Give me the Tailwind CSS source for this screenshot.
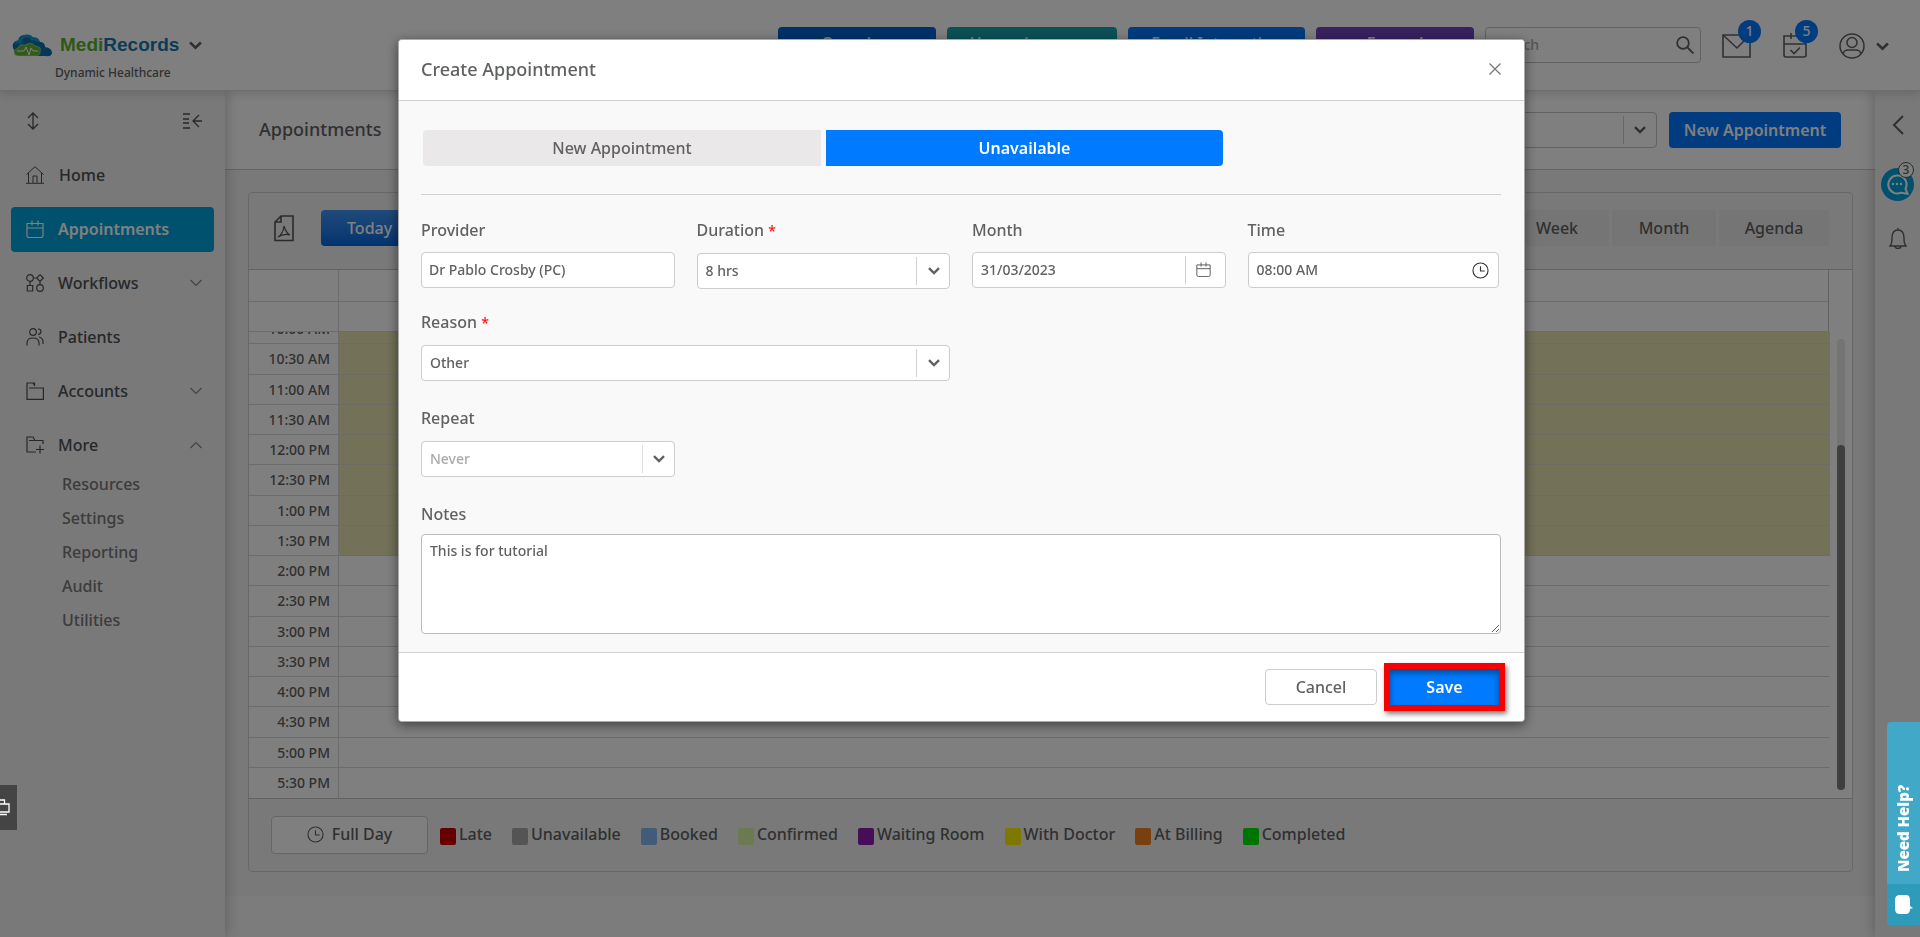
<!DOCTYPE html>
<html lang="en">
<head>
<meta charset="utf-8">
<title>MediRecords - Appointments</title>
<script src="https://cdn.jsdelivr.net/npm/@tailwindcss/browser@4"></script>
</head>
<body class="min-h-screen overflow-hidden bg-[#f8f8f8] font-['Noto_Sans',sans-serif] text-base font-medium text-[#5f6163]">
<svg class="hidden">
  <symbol id="chev" viewBox="0 0 12 8"><path d="M1 1.2 6 6l5-4.8" fill="none" stroke="currentColor" stroke-width="2.4"/></symbol>
  <symbol id="thin" viewBox="0 0 12 8"><path d="M.5 1 6 6.5 11.500 1" fill="none" stroke="#85888b" stroke-width="1.200"/></symbol>
  <symbol id="cal" viewBox="0 0 18 18"><path d="M1 3.500h16v12q0 2-2 2H3q-2 0-2-2zM1 8h16M6 .5v5M12 .5v5" fill="none" stroke="currentColor" stroke-width="1.200"/></symbol>
  <symbol id="clock" viewBox="0 0 18 18"><path d="M9 1a8 8 0 1 0 0 16A8 8 0 0 0 9 1zM9 4.500V9.500h4.500" fill="none" stroke="currentColor" stroke-width="1.200"/></symbol>
</svg>

<div class="flex min-h-screen flex-col">
  <header class="relative z-10 flex h-[91px] items-start border-b border-[#dcdcdc] bg-white shadow-[0_2px_10px_rgba(0,0,0,0.16)]">
    <div class="flex-1 pt-[29px] pl-3">
      <div class="flex h-8 items-center">
        <svg class="h-[23px] w-10" viewBox="0 0 40 23">
          <path d="M2 16Q-2 8 6 7 7 0 14 1q5 0 7 3 5-1 7 4 5 0 5 5 7 1 7 6-1 4-6 3H8Q3 21 2 16z" fill="#0c6fa8"/>
          <path d="M3 9q4-2 5-1 1-6 7-6 4 0 5 3 5-1 6 3" fill="none" stroke="#0a9ad2" stroke-width="3"/>
          <path d="M3 21q-3-5 3-7 1-4 7-3 7-4 10 1 7 0 5 6 0 4-5 4H8q-3 0-5-1z" fill="#62b330" stroke="#d8f0c8" stroke-width=".5"/>
          <path d="M5 17h7l2-4 3 8 2-7 2 3h5" fill="none" stroke="#fff" stroke-width="1"/>
        </svg>
        <a href="#" class="ml-2 font-['Liberation_Sans',sans-serif] text-[19px] leading-6 font-bold text-[#1778ac]"><span class="text-[#5bb02c]">Medi</span>Records</a>
        <button aria-label="Switch practice" class="ml-2.5"><svg class="h-[9px] w-[13px]"><use href="#chev"/></svg></button>
      </div>
      <div class="pt-0.5 pl-[43px] text-xs leading-5">Dynamic Healthcare</div>
    </div>
    <div class="flex gap-[11px] pt-[27px] text-white">
      <button class="h-9 w-[158px] rounded bg-[#0064d2] pb-1">Overview</button>
      <button class="h-9 w-[170px] rounded bg-[#17a2b0] pb-1">Upcoming cases</button>
      <button class="h-9 w-[177px] rounded bg-[#0078ff] pb-1">Email Interaction</button>
      <button class="h-9 w-[158px] rounded bg-[#6f42c1] pb-1">Expand</button>
    </div>
    <div class="mt-[27px] ml-[11px] flex h-9 w-[216px] items-center rounded border border-[#c4c4c4] pr-1.5">
      <input aria-label="Search" placeholder="Search" class="w-0 flex-1 pl-2 text-sm placeholder:text-[#aaa]">
      <svg class="size-[18px]" viewBox="0 0 18 18" fill="none" stroke="currentColor" stroke-width="1.800"><circle cx="7" cy="7" r="5.800"/><path d="m11 11 6.500 6.500"/></svg>
    </div>
    <div class="flex w-[219px] pt-[33px] pl-[21px]">
      <button aria-label="Messages" class="relative h-[25px] w-[29px]">
        <svg class="h-[25px] w-[29px]" viewBox="0 0 29 25" fill="none" stroke="currentColor" stroke-width="1.600"><path d="M1 2h27v22H1zM1 2l14 13L28 2"/></svg>
        <span class="absolute -top-[13px] left-4 size-[23px] rounded-full bg-[#0078ff] text-sm leading-[22px] text-white">1</span>
      </button>
      <button aria-label="Tasks" class="relative ml-8 h-[25px] w-6">
        <svg class="h-[25px] w-6" viewBox="0 0 24 25" fill="none" stroke="currentColor" stroke-width="1.600"><path d="M1 3h22v19q0 2-2 2H3q-2 0-2-2zM1 11h22M8 0v6M16 0v6M7.500 17l3.500 3.500 6-6"/></svg>
        <span class="absolute -top-[13px] left-3 size-[23px] rounded-full bg-[#0078ff] text-sm leading-[22px] text-white">5</span>
      </button>
      <button aria-label="Account" class="ml-8 flex items-center gap-[11px]">
        <svg class="size-[26px]" viewBox="0 0 26 26" fill="none" stroke="currentColor" stroke-width="1.500"><circle cx="13" cy="13" r="12"/><circle cx="13" cy="9.500" r="5"/><path d="M4 21q1-4 5-4h8q4 0 5 4"/></svg>
        <svg class="h-[9px] w-[13px]"><use href="#chev"/></svg>
      </button>
    </div>
  </header>

  <div class="flex flex-1">
    <nav class="relative z-[5] w-[225px] shrink-0 bg-[#f2f2f2] px-[11px] pt-5 text-[#4c5055] shadow-[2px_0_12px_rgba(0,0,0,0.2)]">
      <div class="flex h-5 items-center justify-between pr-3 pl-[15px]">
        <svg class="h-[18px] w-3.5" viewBox="0 0 14 18" fill="none" stroke="currentColor" stroke-width="1.300"><path d="M7 1v16M2 6l5-5 5 5M2 12l5 5 5-5"/></svg>
        <svg class="h-4 w-5" viewBox="0 0 20 16" fill="none" stroke="currentColor" stroke-width="1.300"><path d="M1 1h7M1 6h6M1 10h6M1 15h7M20 8h-9M17 2l-6 6 6 6"/></svg>
      </div>
      <div class="mt-[22px] flex flex-col gap-[9px]">
        <a href="#" class="flex h-[45px] items-center pb-0.5 pl-[15px]"><svg class="mr-[15px] h-[18px] w-[18px]" viewBox="0 0 18 18" fill="none" stroke="currentColor"><path d="M.5 8.500 9 .7l8.500 7.800M2.500 7v10M15.500 7v10M0 17.300h18M7 17v-7h4v7"/></svg>Home</a>
        <a href="#" class="flex h-[45px] items-center rounded bg-[#00a3dd] pb-0.5 pl-[15px] font-semibold text-white"><svg class="mr-3.5 size-[18px]"><use href="#cal"/></svg>Appointments</a>
        <a href="#" class="flex h-[45px] items-center pr-3 pb-0.5 pl-[15px]"><svg class="mr-3.5 size-[18px]" viewBox="0 0 18 18" fill="none" stroke="currentColor" stroke-width="1.200"><circle cx="4" cy="4" r="3.300"/><path d="m14 .7 3.300 3.300L14 7.300 10.700 4zM7.300 4h3.400M4 7.300V11M14 7.300v3.400M1.300 11.500h5.400V17H1.300z"/><circle cx="14" cy="14" r="3.300"/></svg><span class="flex-1">Workflows</span><svg class="h-2 w-3"><use href="#thin"/></svg></a>
        <a href="#" class="flex h-[45px] items-center pb-0.5 pl-[15px]"><svg class="mr-3.5 size-[18px]" viewBox="0 0 18 18" fill="none" stroke="currentColor" stroke-width="1.200"><circle cx="7" cy="4" r="3.300"/><path d="M1 17.500V15q0-5 6-5t6 5v2.500M12 1q3 0 3 2.500T12 6.500M13 9q4 1 4 5v2"/></svg>Patients</a>
        <a href="#" class="flex h-[45px] items-center pr-3 pb-0.5 pl-[15px]"><svg class="mr-3.5 size-[18px]" viewBox="0 0 18 18" fill="none" stroke="currentColor" stroke-width="1.200"><path d="M8.500 3.500V1H1v16.300h16.400V6H3"/><path d="m7 1 2 3"/></svg><span class="flex-1">Accounts</span><svg class="h-2 w-3"><use href="#thin"/></svg></a>
        <a href="#" class="flex h-[45px] items-center pr-3 pb-0.5 pl-[15px]"><svg class="mr-3.5 size-[18px]" viewBox="0 0 18 18" fill="none" stroke="currentColor" stroke-width="1.200"><path d="M10 16H1V1h6l2 3.500h8V8M3 4.500h6M14 9.500v8M10 13.500h8"/></svg><span class="flex-1">More</span><svg class="h-2 w-3 rotate-180"><use href="#thin"/></svg></a>
      </div>
      <div class="flex flex-col gap-2.5 pl-[51px] leading-6 text-[#76787a]">
        <a href="#" class="mt-1">Resources</a><a href="#">Settings</a><a href="#">Reporting</a><a href="#">Audit</a><a href="#">Utilities</a>
      </div>
    </nav>

    <main class="min-w-0 flex-1">
      <div class="flex h-[79px] items-center border-b border-[#c8c8c8] bg-white pr-[34px] pl-[34px]">
        <h1 class="flex-1 pb-0.5 text-lg font-medium">Appointments</h1>
        <div class="relative mr-3 h-9 w-[300px]">
          <select aria-label="Provider filter" class="h-full w-full appearance-none rounded border border-[#c4c4c4]"><option></option></select>
          <span class="pointer-events-none absolute top-1 right-0 flex h-7 w-[34px] items-center justify-center border-l border-[#ccc] pr-0.5"><svg class="h-2 w-3"><use href="#chev"/></svg></span>
        </div>
        <button class="h-9 w-[172px] rounded bg-[#0078ff] font-semibold whitespace-nowrap text-white">New Appointment</button>
      </div>
      <div class="bg-[#f2f2f2] pt-[22px] pr-[22px] pb-6 pl-[23px]">
        <section class="rounded border border-[#cfcfcf]">
          <div class="flex h-[77px] items-center border-b border-[#c4c4c4] pr-[23px] pb-1.5 pl-[25px]">
            <svg class="h-[27px] w-5" viewBox="0 0 20 27" fill="none" stroke="#555" stroke-width="1.600"><path d="M7 1h12v24.500H1V7zM7 1v6H1"/><path d="M10 11q2 7 6 9-6-2-12 2 5-3 6-11z" stroke-width="1.200"/></svg>
            <button class="ml-[27px] h-9 w-[98px] rounded bg-linear-to-b from-[#3f94f5] to-[#0068de] pl-[26px] text-left text-white">Today</button>
            <div class="flex-1"></div>
            <div class="flex gap-[3px]">
              <button class="h-9 w-[104px] bg-[#ebebeb]">Week</button>
              <button class="h-9 w-[104px] bg-[#ebebeb]">Month</button>
              <button class="h-9 w-[110px] rounded-r bg-[#ebebeb]">Agenda</button>
            </div>
          </div>
          <div class="flex bg-white">
            <div class="min-w-0 flex-1">
              <div class="mr-px border-r border-[#c4c4c4]">
                <div class="flex h-8 border-b border-[#d8d8d8]"><div class="w-[90px] border-r border-[#d8d8d8]"></div></div>
                <div class="flex h-[30px] border-b border-[#d8d8d8]"><div class="w-[90px] border-r border-[#d8d8d8]"></div></div>
              </div>
              <div class="flex h-[466px] flex-col justify-end overflow-hidden">
                <table class="w-full border-separate border-spacing-0 text-right text-sm leading-5">
                  <tbody id="slots"></tbody>
                </table>
              </div>
            </div>
            <div class="flex w-[22px] flex-col pt-[69px] pb-2 pl-[7px]">
              <div class="w-2 flex-1 rounded-full bg-[#e8e8e8] pt-[106px]"><div class="h-full rounded-full bg-[#7e7e7e]"></div></div>
            </div>
          </div>
          <div class="flex h-[73px] items-start border-t border-[#c4c4c4] pt-[17px] pl-[22px]">
            <button class="mr-3 flex h-[38px] w-[157px] items-center justify-center gap-2 rounded border border-[#ccc] bg-white pb-0.5"><svg class="size-[17px]"><use href="#clock"/></svg>Full Day</button>
            <ul class="flex gap-5 pt-1.5 leading-6">
              <li class="flex items-center gap-[3px]"><span class="mt-1 h-[17px] w-4 rounded-xs bg-[#cc0000]"></span>Late</li>
              <li class="flex items-center gap-[3px]"><span class="mt-1 h-[17px] w-4 rounded-xs bg-[#a8a8a8]"></span>Unavailable</li>
              <li class="flex items-center gap-[3px]"><span class="mt-1 h-[17px] w-4 rounded-xs bg-[#80b8f4]"></span>Booked</li>
              <li class="flex items-center gap-[3px]"><span class="mt-1 h-[17px] w-4 rounded-xs bg-[#d8f4a0]"></span>Confirmed</li>
              <li class="flex items-center gap-[3px]"><span class="mt-1 h-[17px] w-4 rounded-xs bg-[#8c1cb0]"></span>Waiting Room</li>
              <li class="flex items-center gap-[3px]"><span class="mt-1 h-[17px] w-4 rounded-xs bg-[#fff000]"></span>With Doctor</li>
              <li class="flex items-center gap-[3px]"><span class="mt-1 h-[17px] w-4 rounded-xs bg-[#f08020]"></span>At Billing</li>
              <li class="flex items-center gap-[3px]"><span class="mt-1 h-[17px] w-4 rounded-xs bg-[#00e800]"></span>Completed</li>
            </ul>
          </div>
        </section>
      </div>
    </main>

    <aside class="relative z-[5] flex w-[45px] shrink-0 flex-col items-center bg-[#f2f2f2] pt-6 shadow-[-2px_0_12px_rgba(0,0,0,0.2)]">
      <button aria-label="Expand panel"><svg class="h-5 w-3" viewBox="0 0 12 20" fill="none" stroke="currentColor" stroke-width="2"><path d="M11 1 2 10l9 9"/></svg></button>
      <button aria-label="Chat" class="relative mt-[33px] size-[33px] rounded-full bg-[#00a3dd]">
        <svg class="size-[33px]" viewBox="0 0 33 33"><path d="M16 7.500a9 9 0 1 0 4 17.200l6.500 1-2-5A9 9 0 0 0 16 7.500z" fill="none" stroke="#fff" stroke-width="2"/><circle cx="12" cy="16" r="1.200" fill="#fff"/><circle cx="16" cy="16" r="1.200" fill="#fff"/><circle cx="20" cy="16" r="1.200" fill="#fff"/></svg>
        <span class="absolute -top-1.5 left-[17px] size-4 rounded-full border border-[#555] bg-white text-xs leading-[14px]">3</span>
      </button>
      <button aria-label="Notifications" class="mt-[27px]"><svg class="h-[21px] w-[18px]" viewBox="0 0 18 21" fill="none" stroke="currentColor" stroke-width="1.400"><path d="M9 0v2M1 18h16q-2-2-2-8 0-8-6-8t-6 8q0 6-2 8zM6 18q0 2.500 3 2.500t3-2.500"/></svg></button>
    </aside>
  </div>
</div>

<div class="fixed inset-0 z-20 flex items-start justify-center bg-black/50 pt-[39px] pl-[3px]">
  <form role="dialog" aria-labelledby="dlg" class="w-[1127px] overflow-hidden rounded border border-[#aaa] bg-[#f9f9f9] shadow-[0_3px_12px_rgba(0,0,0,0.5)]">
    <div class="flex h-[61px] items-center justify-between border-b border-[#d0d0d0] bg-white pr-[19px] pb-0.5 pl-[22px]">
      <h2 id="dlg" class="text-lg font-medium">Create Appointment</h2>
      <button type="button" aria-label="Close" class="p-1"><svg class="size-3" viewBox="0 0 12 12" fill="none" stroke="#777" stroke-width="1.300"><path d="m.5.5 11 11M11.500.5l-11 11"/></svg></button>
    </div>
    <div class="pt-[29px] pr-[23px] pb-[18px] pl-[22px]">
      <div class="flex gap-[5px] border-b border-[#d0d0d0] pb-7 pl-0.5">
        <button type="button" class="h-9 w-[398px] rounded-l bg-[#eae8e8]">New Appointment</button>
        <button type="button" class="h-9 w-[397px] rounded-r bg-[#007bff] font-semibold text-white">Unavailable</button>
      </div>
      <div class="grid grid-cols-4 gap-x-[22px] pt-[23px] leading-6">
        <div class="flex flex-col gap-2.5"><label for="provider">Provider</label><input id="provider" value="Dr Pablo Crosby (PC)" class="h-9 rounded border border-[#ccc] bg-white px-[7px] pb-0.5 text-sm"></div>
        <div class="flex flex-col gap-[11px]"><label for="duration">Duration <span class="text-sm text-[#ff1111]">*</span></label>
          <div class="relative"><select id="duration" class="h-9 w-full appearance-none rounded border border-[#ccc] bg-white px-2 text-sm"><option>8 hrs</option></select><span class="pointer-events-none absolute top-1 right-0 flex h-7 w-[34px] items-center justify-center border-l border-[#d0d0d0]"><svg class="h-2 w-3"><use href="#chev"/></svg></span></div></div>
        <div class="flex flex-col gap-2.5"><label for="month">Month</label>
          <div class="relative"><input id="month" value="31/03/2023" class="h-9 w-full rounded border border-[#ccc] bg-white px-2 pb-0.5 text-sm"><button type="button" aria-label="Pick date" class="absolute top-1 right-0 flex h-7 w-[41px] items-center justify-center border-l border-[#d0d0d0] pr-1 pb-0.5"><svg class="size-[15px]"><use href="#cal" /></svg></button></div></div>
        <div class="flex flex-col gap-2.5"><label for="time">Time</label>
          <div class="relative mr-0.5"><input id="time" value="08:00 AM" class="h-9 w-full rounded border border-[#ccc] bg-white px-2 pb-0.5 text-sm"><button type="button" aria-label="Pick time" class="absolute top-2.5 right-2.5 text-[#333]"><svg class="size-[17px]"><use href="#clock"/></svg></button></div></div>
      </div>
      <div class="grid grid-cols-4 gap-x-[22px] leading-6">
        <div class="col-span-2 flex flex-col gap-[11px] pt-[21px]"><label for="reason">Reason <span class="text-sm text-[#ff1111]">*</span></label>
          <div class="relative"><select id="reason" class="h-9 w-full appearance-none rounded border border-[#ccc] bg-white px-2 text-sm"><option>Other</option></select><span class="pointer-events-none absolute top-1 right-0 flex h-7 w-[34px] items-center justify-center border-l border-[#d0d0d0]"><svg class="h-2 w-3"><use href="#chev"/></svg></span></div></div>
        <div class="col-start-1 flex flex-col gap-[11px] pt-[25px]"><label for="repeat">Repeat</label>
          <div class="relative"><select id="repeat" class="h-9 w-full appearance-none rounded border border-[#ccc] bg-white px-2 text-sm text-[#aaa]"><option>Never</option></select><span class="pointer-events-none absolute top-1 right-0 flex h-7 w-[33px] items-center justify-center border-l border-[#e0e0e0]"><svg class="h-2 w-3"><use href="#chev"/></svg></span></div></div>
        <div class="col-span-4 flex flex-col gap-2 pt-[25px]"><label for="notes">Notes</label><textarea id="notes" class="h-[100px] rounded border border-[#bbb] bg-white px-2 py-1.5 text-sm leading-5">This is for tutorial</textarea></div>
      </div>
    </div>
    <div class="flex h-[69px] items-start justify-end gap-[7px] border-t border-[#d0d0d0] bg-white pt-2.5 pr-[19px]">
      <button type="button" class="mt-1.5 h-9 w-28 rounded border border-[#ccc]">Cancel</button>
      <button type="submit" class="h-12 w-[121px] border-6 border-[#f70000] bg-[#007bff] font-semibold text-white shadow-[2px_3px_5px_rgba(0,0,0,0.5),inset_0_4px_6px_rgba(0,0,0,0.4)]">Save</button>
    </div>
  </form>
</div>

<button aria-label="Print" class="fixed top-[785px] left-0 z-30 h-[45px] w-[17px] bg-[#444]">
  <svg class="h-[17px] w-2.5" viewBox="0 0 10 17" fill="none" stroke="#fff" stroke-width="1.300"><path d="M0 1h4.500v4M0 5h9v8H0M0 15.500h7"/></svg>
</button>
<button class="fixed right-0 bottom-3 z-30 flex h-[203px] w-[33px] flex-col items-center overflow-hidden rounded-l bg-[#41a8c8] text-white">
  <span class="flex flex-1 rotate-180 items-center justify-start pt-3 font-['Noto_Sans',sans-serif] text-[15px] font-black [writing-mode:vertical-rl]">Need Help?</span>
  <span class="flex h-[41px] w-full items-center justify-center bg-[#2e9bbb]"><svg class="h-[19px] w-[18px]" viewBox="0 0 18 19" fill="#fff"><path d="M5 0h6q4 0 4 5v6l3 2-3 1q0 5-4 5H5Q0 19 0 14V5q0-5 5-5z"/></svg></span>
</button>

<script>
const times = ["10:00 AM","10:30 AM","11:00 AM","11:30 AM","12:00 PM","12:30 PM","1:00 PM","1:30 PM","2:00 PM","2:30 PM","3:00 PM","3:30 PM","4:00 PM","4:30 PM","5:00 PM","5:30 PM"];
document.getElementById("slots").innerHTML = times.map((t, i) => {
  const h = i % 4 === 1 ? "h-[31px]" : "h-[30px]";
  const line = i === 15 ? "" : "border-b";
  const fill = i < 8 ? "bg-[#e6e2b0] border-[#d8d8c8]" : "border-[#d8d8d8]";
  return `<tr class="${h}"><th scope="row" class="w-[90px] border-r ${line} border-[#d8d8d8] py-0 pr-2 font-medium">${t}</th><td class="${line} ${fill} p-0"></td></tr>`;
}).join("");
</script>
</body>
</html>
